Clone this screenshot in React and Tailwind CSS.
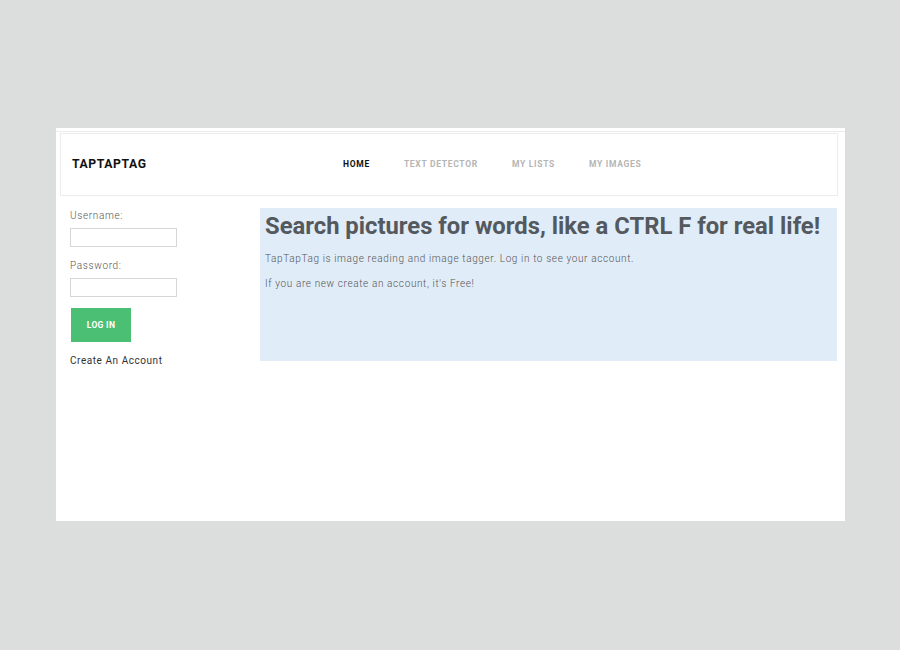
import React from 'react';

const navItems = [
  { label: 'HOME', active: true },
  { label: 'TEXT DETECTOR' },
  { label: 'MY LISTS' },
  { label: 'MY IMAGES' },
];

export default function App() {
  return (
    <div className="w-[900px] h-[650px] bg-[#dcdedd] pt-[128px] pl-[56px] font-['Roboto',sans-serif]">
      <div className="w-[789px] h-[393px] bg-white pt-[3px]">
        <div className="border-t border-[#ececec]">
          {/* Header */}
          <div className="mx-[4px] mt-[1px] h-[63px] w-[778px] border border-[#ececec] flex items-center">
            <div className="w-[282px] pl-[11px] text-[12.2px] font-bold tracking-[0.6px] text-[#111]">
              TAPTAPTAG
            </div>
            <nav className="flex items-center">
              {navItems.map(item => (
                <a
                  key={item.label}
                  className={`text-[8.5px] font-bold tracking-[0.7px] mr-[34px] ${item.active ? 'text-[#111]' : 'text-[#b5b5b5]'}`}
                >
                  {item.label}
                </a>
              ))}
            </nav>
          </div>

          <div className="flex mt-[12px]">
            {/* Login */}
            <div className="w-[200px] pl-[14px] text-[#555] text-[10px] font-light tracking-[0.65px]">
              <label className="block">Username:</label>
              <input className="block mt-[5px] w-[107px] h-[19px] border border-[#d6d6d6] outline-none" />
              <label className="block mt-[11px]">Password:</label>
              <input type="password" className="block mt-[5px] w-[107px] h-[19px] border border-[#d6d6d6] outline-none" />
              <button className="block mt-[11px] ml-px w-[60px] h-[34px] bg-[#4bbf73] text-white text-[8.5px] font-bold tracking-[0.3px]">
                LOG IN
              </button>
              <a className="block mt-[11px] text-[#333] font-normal tracking-[0.55px]">Create An Account</a>
            </div>

            {/* Intro */}
            <div className="ml-[4px] w-[577px] h-[153px] bg-[#e0ecf8] px-[5px] pt-[3px]">
              <h1 className="text-[23.8px] font-bold text-[#54595d] leading-[30px]">
                Search pictures for words, like a CTRL F for real life!
              </h1>
              <p className="mt-[10px] text-[10px] font-light tracking-[0.62px] text-[#555]">
                TapTapTag is image reading and image tagger. Log in to see your account.
              </p>
              <p className="mt-[10px] text-[10px] font-light tracking-[0.62px] text-[#555]">
                If you are new create an account, it's Free!
              </p>
            </div>
          </div>
        </div>
      </div>
    </div>
  );
}
